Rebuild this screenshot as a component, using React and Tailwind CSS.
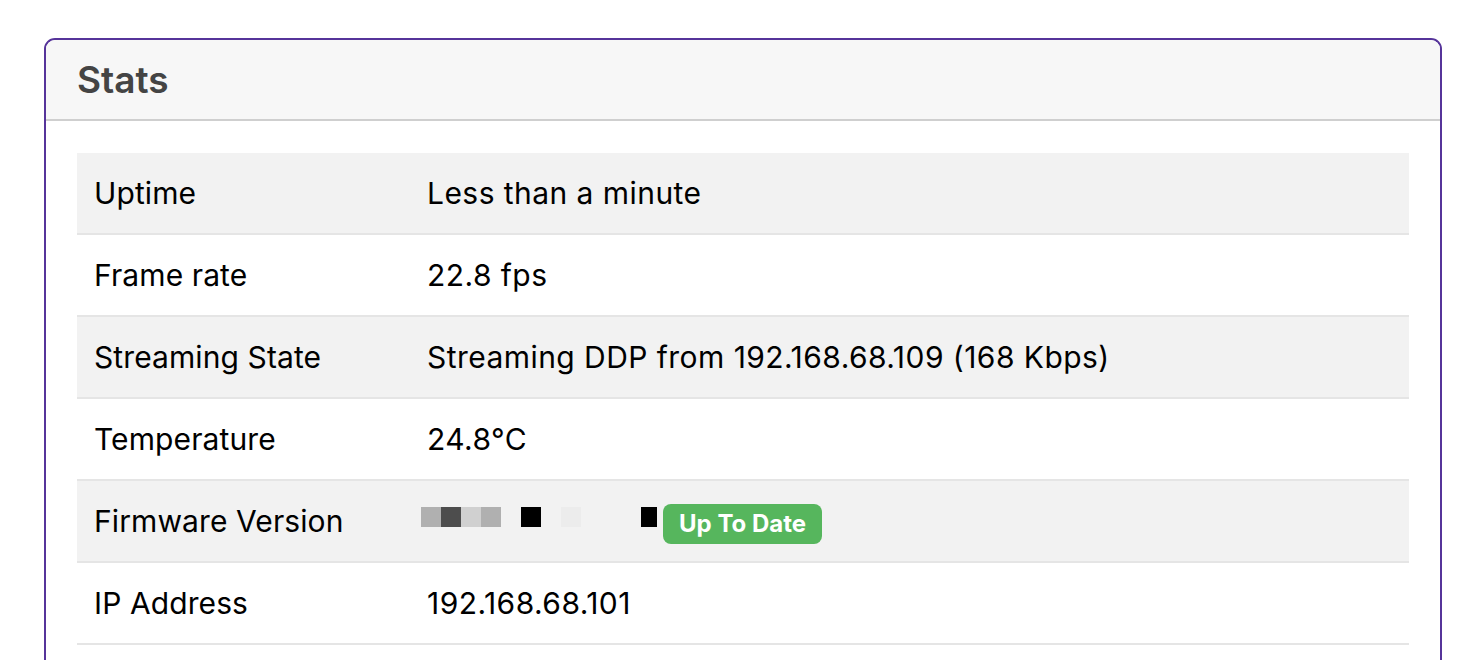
import React from "react";

const rows = [
  { label: "Uptime", value: "Less than a minute" },
  { label: "Frame rate", value: "22.8 fps" },
  { label: "Streaming State", value: "Streaming DDP from 192.168.68.109 (168 Kbps)" },
  { label: "Temperature", value: "24.8°C" },
  { label: "Firmware Version", firmware: true },
  { label: "IP Address", value: "192.168.68.101" },
];

// redacted version string, drawn as blocks
const Redacted = () => (
  <div className="flex items-center h-[20px] mt-[-8px]">
    <span className="w-[20px] h-[20px] bg-[#b0b0b0]" />
    <span className="w-[20px] h-[20px] bg-[#4d4d4d]" />
    <span className="w-[20px] h-[20px] bg-[#d0d0d0]" />
    <span className="w-[20px] h-[20px] bg-[#b0b0b0]" />
    <span className="w-[20px] h-[20px]" />
    <span className="w-[20px] h-[20px] bg-black" />
    <span className="w-[20px] h-[20px]" />
    <span className="w-[20px] h-[20px] bg-[#ececec]" />
    <span className="w-[60px] h-[20px]" />
    <span className="w-[16px] h-[20px] bg-black" />
  </div>
);

export default function App() {
  return (
    <div
      className="w-[1466px] h-[660px] overflow-hidden bg-white"
      style={{ fontFamily: "Inter, 'Liberation Sans', Arial, sans-serif" }}
    >
      <div className="pt-[38px] pl-[44px] pr-[24px]">
        <div className="border-2 border-[#56349a] rounded-[11px] overflow-hidden h-[700px]">
          <div className="h-[81px] bg-[#f7f7f7] border-b-2 border-[#cfcfcf] flex items-center pl-[31px]">
            <h2 className="text-[37px] font-semibold text-[#444444] mt-[1px]">Stats</h2>
          </div>
          <div className="px-[31px] pt-[32px]">
            {rows.map((r, i) => (
              <div
                key={r.label}
                className={`flex items-center h-[82px] border-b-2 border-[#e5e5e5] text-[30px] tracking-[0.1px] text-black ${
                  i % 2 === 0 ? "bg-[#f2f2f2]" : "bg-white"
                }`}
              >
                <div className="w-[350px] pl-[17px]">{r.label}</div>
                {r.firmware ? (
                  <div className="flex items-center -ml-[6px]">
                    <Redacted />
                    <span className="ml-[6px] mt-[6px] h-[40px] px-[16px] rounded-[8px] bg-[#56b65d] text-white text-[24px] tracking-normal font-bold flex items-center">
                      Up To Date
                    </span>
                  </div>
                ) : (
                  <div className="tracking-[0.45px]">{r.value}</div>
                )}
              </div>
            ))}
          </div>
        </div>
      </div>
    </div>
  );
}
